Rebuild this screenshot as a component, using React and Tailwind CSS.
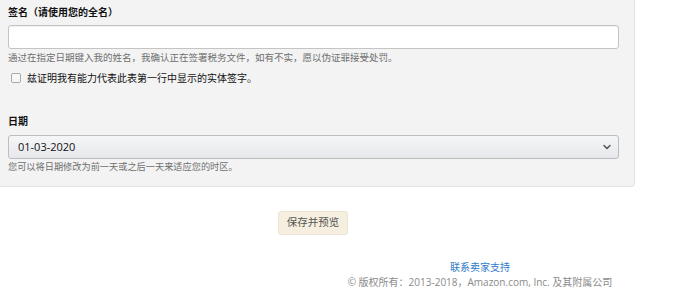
import { ChevronDown } from "lucide-react";

const font = { fontFamily: '"Open Sans", "Noto Sans CJK SC", sans-serif' };

function App() {
  return (
    <div
      className="h-[295px] w-[692px] overflow-hidden bg-white text-[#111]"
      style={font}
    >
      <div className="w-[635px] rounded-br-[4px] border-r border-b border-[#e2e2e2] bg-[#f3f3f3] pl-2 pr-[15px] pt-[5px] pb-[13px]">
        <p className="text-[10px] font-bold leading-[14px]">签名（请使用您的全名）</p>
        <div className="mt-[6px] h-6 rounded-[3px] border border-[#c4c4c4] bg-white shadow-[inset_0_1px_1px_rgba(0,0,0,0.06)]" />
        <p className="mt-[2px] text-[9.5px] leading-[13px] text-[#6f6f6f]">
          通过在指定日期键入我的姓名，我确认正在签署税务文件，如有不实，愿以伪证罪接受处罚。
        </p>
        <label className="mt-[7px] flex items-center gap-[6px] pl-[3px]">
          <span className="h-[10px] w-[10px] rounded-[2px] border border-[#a9a9a9] bg-[#f7f7f7]" />
          <span className="text-[10px] leading-[14px]">兹证明我有能力代表此表第一行中显示的实体签字。</span>
        </label>

        <p className="mt-[29px] text-[10px] font-bold leading-[14px]">日期</p>
        <div className="mt-[7px] flex h-[24px] items-center justify-between rounded-[3px] border border-[#bdbdbd] bg-gradient-to-b from-[#f5f6f8] to-[#e7e8eb] pl-[9px] pr-[5px]">
          <span className="text-[11px] text-[#111]">01-03-2020</span>
          <ChevronDown size={12} strokeWidth={3} className="text-[#555]" />
        </div>
        <p className="mt-[1px] text-[9.2px] leading-[13px] text-[#6f6f6f]">
          您可以将日期修改为前一天或之后一天来适应您的时区。
        </p>
      </div>

      <div className="mt-[21px] pl-[278px]">
        <button className="h-6 w-[70px] rounded-[3px] border border-[#ece4d2] bg-[#f6efe0] text-[10.5px] text-[#555]">
          保存并预览
        </button>
      </div>

      <div className="mt-[25px] flex w-[960px] flex-col items-center">
        <a className="text-[10px] leading-[14px] text-[#2f7bc9]">联系卖家支持</a>
        <p className="text-[10px] leading-[16px] text-[#8a8a8a]">
          © 版权所有：2013-2018，Amazon.com, Inc. 及其附属公司
        </p>
      </div>
    </div>
  );
}

export default App;
